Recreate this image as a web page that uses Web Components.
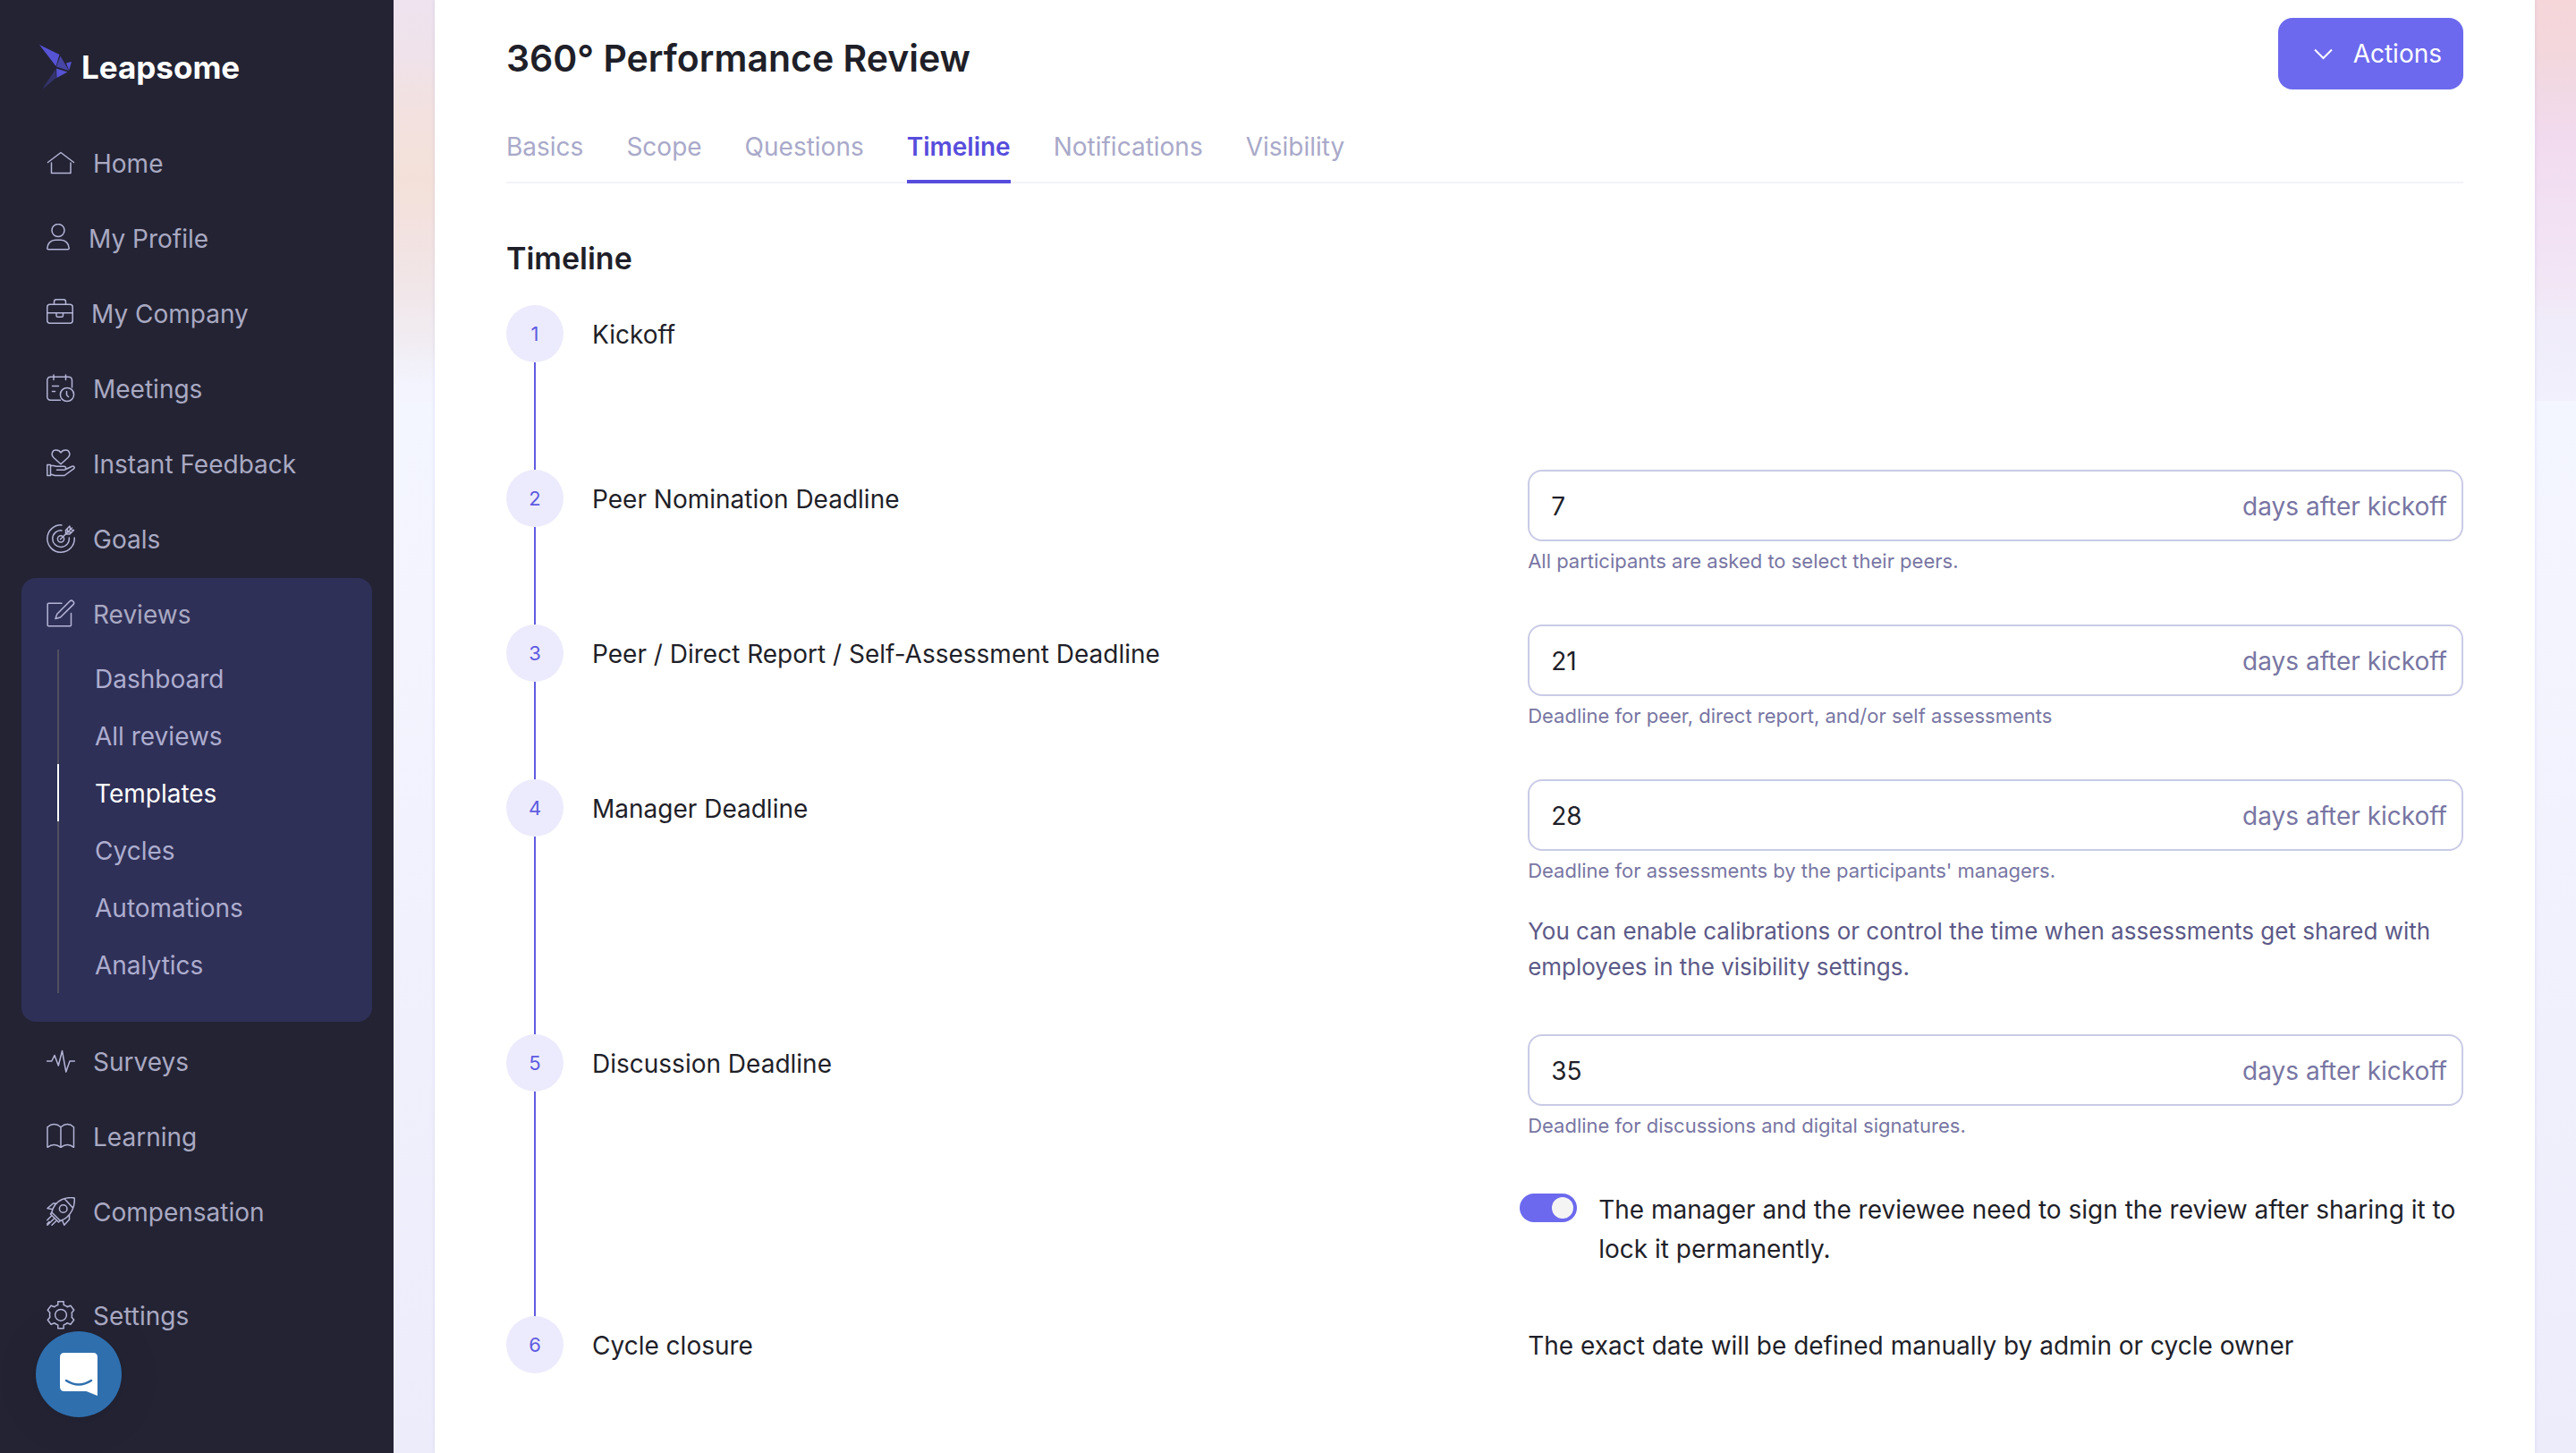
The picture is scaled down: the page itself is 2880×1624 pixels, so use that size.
<!DOCTYPE html>
<html lang="en">
<head>
<meta charset="utf-8">
<title>360° Performance Review</title>
<style>
  body {
    margin: 0;
    font-family: Inter, "Liberation Sans", sans-serif;
    font-size: 28px;
    line-height: 40px;
    color: #1f1f29;
    background: #fff;
  }
</style>
</head>
<body>
<app-shell>
  <side-nav slot="nav">
    <nav-item icon="home">Home</nav-item>
    <nav-item icon="profile">My Profile</nav-item>
    <nav-item icon="company">My Company</nav-item>
    <nav-item icon="meetings">Meetings</nav-item>
    <nav-item icon="feedback">Instant Feedback</nav-item>
    <nav-item icon="goals">Goals</nav-item>
    <nav-group>
      <nav-item slot="head" icon="reviews">Reviews</nav-item>
      <nav-subitem>Dashboard</nav-subitem>
      <nav-subitem>All reviews</nav-subitem>
      <nav-subitem active>Templates</nav-subitem>
      <nav-subitem>Cycles</nav-subitem>
      <nav-subitem>Automations</nav-subitem>
      <nav-subitem>Analytics</nav-subitem>
    </nav-group>
    <nav-item icon="surveys">Surveys</nav-item>
    <nav-item icon="learning">Learning</nav-item>
    <nav-item icon="compensation">Compensation</nav-item>
    <nav-item slot="footer" icon="settings">Settings</nav-item>
  </side-nav>

  <page-header heading="360° Performance Review">
    <action-button>Actions</action-button>
  </page-header>
  <tab-bar>
    <tab-link>Basics</tab-link>
    <tab-link>Scope</tab-link>
    <tab-link>Questions</tab-link>
    <tab-link active>Timeline</tab-link>
    <tab-link>Notifications</tab-link>
    <tab-link>Visibility</tab-link>
  </tab-bar>
  <time-line heading="Timeline">
    <timeline-step number="1" label="Kickoff"></timeline-step>
    <timeline-step number="2" label="Peer Nomination Deadline">
      <days-field name="Peer Nomination Deadline" value="7">All participants are asked to select their peers.</days-field>
    </timeline-step>
    <timeline-step number="3" label="Peer / Direct Report / Self-Assessment Deadline">
      <days-field name="Peer / Direct Report / Self-Assessment Deadline" value="21">Deadline for peer, direct report, and/or self assessments</days-field>
    </timeline-step>
    <timeline-step number="4" label="Manager Deadline">
      <days-field name="Manager Deadline" value="28">Deadline for assessments by the participants' managers.</days-field>
      <info-note>You can enable calibrations or control the time when assessments get shared with employees in the visibility settings.</info-note>
    </timeline-step>
    <timeline-step number="5" label="Discussion Deadline">
      <days-field name="Discussion Deadline" value="35">Deadline for discussions and digital signatures.</days-field>
      <toggle-switch>The manager and the reviewee need to sign the review after sharing it to lock it permanently.</toggle-switch>
    </timeline-step>
    <timeline-step number="6" label="Cycle closure" last>
      <plain-text>The exact date will be defined manually by admin or cycle owner</plain-text>
    </timeline-step>
  </time-line>

  <chat-launcher slot="overlay"></chat-launcher>
</app-shell>

<script>
const define = (name, render) => customElements.define(name, class extends HTMLElement {
  constructor() {
    super();
    this.attachShadow({ mode: 'open' });
  }
  connectedCallback() {
    this.shadowRoot.innerHTML = '<style>*{box-sizing:border-box}</style>' + render(this);
  }
});

/* Each icon: [box width, drawing on a 32px high grid] */
const ICONS = {
  home: [32, '<path d="M1.5 15.5 16 4.500 30.500 15.500M5.500 16V27.500H27V16"/>'],
  profile: [27, '<circle cx="13" cy="7.500" r="7"/><path d="M.8 27.500C.8 22 5 18.300 10 18.300h6c5 0 9.200 3.700 9.200 9.200 0 .8-.4 1.200-1.200 1.200H2c-.8 0-1.200-.4-1.200-1.200z"/>'],
  company: [30, '<rect x=".8" y="6.300" width="28.400" height="21" rx="3"/><path d="M8.500 6.300V3.300q0-2.500 2.500-2.500h8q2.500 0 2.500 2.500v3M.8 15.700H29.200M11 15.700v3q0 1.500 1.500 1.500h4.500q1.500 0 1.500-1.500v-3"/>'],
  meetings: [32, '<path d="M15.500 29.200H4.800q-4 0-4-4V7.200q0-4 4-4H24.500q4 0 4 4V15M8 1v5.500M21.500 1v5.500M6.500 13.500h7M6.500 19.500h3"/><circle cx="23" cy="23" r="7.600"/><path d="M22.500 19.500v4l2 2"/>'],
  feedback: [32, '<path d="M16 16.800 8 9.500C4.500 6 6.500 1 10.500 1 13 1 15 2 16 4 17 2 19 1 21.500 1c4 0 6 5 2.500 8.500zM.8 17.500H4.500V29.500H.8zM4.500 18.500H8l3 .8h8.500c2.800 0 2.800 3.900 0 3.900H11.500M21.500 22.500l7-3.300c2-.8 3.500 1.300 2 2.600L20 29.500H9.500l-5-1.500"/>'],
  goals: [32, '<path d="M17 .9A15.200 15.200 0 1 0 31.200 15M17 6.900A9.300 9.300 0 1 0 25.300 15"/><circle cx="16" cy="16.300" r="3.600"/><path d="M15.500 16.800 28.500 4M21.500 10.500V6.500l4.500-4.500.5 3.800 4 .7-4.500 4.500h-4M23.500 8.500l-.3-3.800M23.500 8.500l3.900.3"/>'],
  reviews: [32, '<path d="M17 4.200H2.200Q1.200 4.200 1.200 5.200V28.800Q1.200 29.800 2.200 29.800H26.500Q27.500 29.800 27.500 28.800V15.500"/><path d="M26 2C27 1 28.600 1 29.600 2S31 4.600 30 5.600L15.500 20 10 21.500 11.800 16.200z"/>'],
  surveys: [32, '<path d="M.5 16H5.800L9 9.500 13.300 21 17.500 4.500 21.800 28 26 16h5.500"/>'],
  learning: [32, '<path d="M16 5.800Q8.500-.7 1 5.800V28.300Q8.500 22.500 16 28.300 23.500 22.500 30.500 28.300V5.800Q23.500-.7 16 5.800zM16 5.800V28.300"/>'],
  compensation: [32, '<path d="M5.800 17C7.500 10.500 11 5.500 17 2.800 22 .6 27 .3 31.200.9 31.600 5.500 31 10 28.800 14.500 26 20 21.500 24.500 15.500 26.500zM5.800 17 4.500 19 13.500 28l2-1.500M20.500 2.200l9 9.800M11.500 7H7.500L1 12.500 7 13.800M25.500 19.500V25L19.800 31.200 17.500 25.800M5 21.500.8 25.800M8 24.500 1 31.300M10.500 27 6 31.300M3 27.500.8 30"/><circle cx="18.700" cy="13" r="4.300"/>'],
  settings: [32, '<circle cx="16" cy="15.800" r="6.400"/><path d="M12.800.7h6.400v3.800q2.200.7 4 2.200l3.700-1.500 3.800 5-2.500 3q.5 2.500 0 5l2.500 3-3.800 5-3.700-1.500q-1.800 1.500-4 2.200v3.800H12.800V26.900q-2.200-.7-4-2.200L5.100 26.200l-3.800-5 2.500-3q-.5-2.500 0-5l-2.500-3 3.800-5L8.800 6.700q1.800-1.500 4-2.200z"/>'],
};

define('app-shell', () => `
  <style>
    :host { display: flex; min-height: 100vh; }
    .nav { flex: 0 0 440px; background: #232334; }
    .stage {
      flex: 1; min-width: 0; display: flex; padding: 0 46px;
      background:
        linear-gradient(#eee3ef, #efe2ea 60px, #f2e1e0 120px, #f3e1d9 200px, #f3e1de 240px, #f1e6e8 320px, #f1ecf2 380px, #f3f4fe 430px) left top / 50% 448px no-repeat,
        linear-gradient(#f6d6d9, #f3d7dc 55px, #f1d9e4 100px, #f2daee 150px, #f2e0f3 230px, #f2e6f5 320px, #f0ecf9 360px, #f1f0fc 448px) right top / 50% 448px no-repeat,
        linear-gradient(#f3f5ff 448px, #f3f4fe 700px, #edecfb);
    }
    .card { flex: 1; min-width: 0; background: #fff; padding: 0 80px; box-shadow: 0 0 4px rgba(80, 80, 160, .14); }
  </style>
  <div class="nav"><slot name="nav"></slot></div>
  <div class="stage"><main class="card"><slot></slot></main></div>
  <slot name="overlay"></slot>`);

define('side-nav', () => `
  <style>
    :host { display: block; padding: 50px 24px 0; }
    .logo { display: flex; align-items: center; gap: 11px; height: 50px; margin: 0 20px 42px; color: #fff; font-size: 35px; font-weight: 700; text-decoration: none; }
    nav, .footer { display: flex; flex-direction: column; gap: 4px; }
    .footer { margin-top: 36px; }
  </style>
  <a class="logo" href="#home">
    <svg width="36" height="50" viewBox="0 0 36 50" aria-hidden="true">
      <path fill="#5653d4" d="M0 0 22.500 11 18.500 24z"/>
      <path fill="#4745a6" d="M23.500 12.500 33 29 19 24.500z"/>
      <path fill="#5653d4" d="M30 20.500 36 19 33.200 28.500z"/>
      <path fill="#5653d4" d="M19 26.500 31.500 30.500 19.500 37z"/>
      <path fill="#34336b" d="M18.200 27 19 37 3 50z"/>
    </svg>
    <span>Leapsome</span>
  </a>
  <nav><slot></slot></nav>
  <div class="footer"><slot name="footer"></slot></div>`);

define('nav-item', el => {
  const [width, art] = ICONS[el.getAttribute('icon')];
  return `
  <style>
    :host { display: block; }
    a { display: flex; align-items: center; gap: 20px; height: 80px; padding: 0 28px; color: #a9a9c2; text-decoration: none; }
    svg { flex: none; fill: none; stroke: #b4b4d6; stroke-width: 1.5; stroke-linejoin: round; stroke-linecap: round; }
    span { line-height: 40px; padding-top: 2px; }
  </style>
  <a href="#${el.getAttribute('icon')}">
    <svg width="${width}" height="32" viewBox="0 0 ${width} 32" aria-hidden="true">${art}</svg>
    <span><slot></slot></span>
  </a>`;
});

define('nav-group', () => `
  <style>
    :host { display: block; background: #2f3057; border-radius: 16px; padding-bottom: 32px; }
    .list { padding-left: 40px; }
  </style>
  <slot name="head"></slot>
  <div class="list"><slot></slot></div>`);

define('nav-subitem', () => `
  <style>
    :host { display: block; }
    a { display: block; height: 64px; line-height: 66px; padding-left: 40px; border-left: 2px solid #50505f; color: #adadcf; text-decoration: none; }
    :host([active]) a { color: #fff; border-color: #fff; }
  </style>
  <a href="#reviews"><slot></slot></a>`);

define('page-header', el => `
  <style>
    :host { display: flex; justify-content: space-between; align-items: flex-end; padding-top: 20px; }
    h1 { margin: 0; font-size: 41px; line-height: 70px; font-weight: 600; }
  </style>
  <h1>${el.getAttribute('heading')}</h1>
  <slot></slot>`);

define('action-button', () => `
  <style>
    :host { display: block; }
    button { display: flex; align-items: center; gap: 22px; height: 80px; padding: 0 24px 0 38px; border: 0; border-radius: 16px; background: #6c69ee; color: #fff; font: inherit; }
  </style>
  <button type="button" aria-haspopup="menu">
    <svg width="24" height="24" viewBox="0 0 24 24" fill="none" stroke="#fff" stroke-width="2" aria-hidden="true"><path d="M3 7.500 12.500 17 22 7.500"/></svg>
    <slot></slot>
  </button>`);

define('tab-bar', () => `
  <style>
    :host { display: block; margin-top: 44px; }
    nav { display: flex; gap: 48px; border-bottom: 2px solid #f3f3fa; }
  </style>
  <nav><slot></slot></nav>`);

define('tab-link', () => `
  <style>
    :host { display: block; margin-bottom: -2px; }
    a { display: block; padding-bottom: 17px; border-bottom: 4px solid transparent; color: #a9a9c9; text-decoration: none; }
    :host([active]) a { color: #574ddc; border-color: #574ddc; font-weight: 600; }
  </style>
  <a href="#tab"><slot></slot></a>`);

define('time-line', el => `
  <style>
    :host { display: block; margin-top: 62px; }
    h2 { margin: 0 0 30px; font-size: 34px; line-height: 44px; font-weight: 600; }
  </style>
  <h2>${el.getAttribute('heading')}</h2>
  <slot></slot>`);

define('timeline-step', el => `
  <style>
    :host { display: flex; min-height: 184px; }
    :host(:not(:first-child)) { min-height: 0; }
    .rail { flex: none; width: 64px; display: flex; flex-direction: column; align-items: center; }
    .dot { width: 64px; height: 64px; border-radius: 50%; background: #ecebfd; color: #5f5be0; font-size: 22px; line-height: 64px; text-align: center; }
    .line { flex: 1; width: 2px; background: #5f5be0; }
    :host([last]) .line { display: none; }
    .label { flex: 1; padding-left: 32px; line-height: 66px; }
    .body { flex: 0 0 47.8%; min-width: 0; padding-bottom: 55px; }
    :host([last]) .body { padding-bottom: 0; }
  </style>
  <div class="rail"><div class="dot">${el.getAttribute('number')}</div><div class="line"></div></div>
  <div class="label">${el.getAttribute('label')}</div>
  <div class="body"><slot></slot></div>`);

define('days-field', el => `
  <style>
    :host { display: block; }
    label { display: flex; align-items: center; height: 80px; padding: 2px 16px 0 24px; border: 2px solid #c9cbe6; border-radius: 16px; color: #7876a3; }
    input { flex: 1; min-width: 0; height: 72px; padding: 0; border: 0; outline: 0; background: none; font: inherit; color: #1f1f29; }
    p { margin: 6px 0 0; font-size: 22px; line-height: 32px; color: #7876a3; }
  </style>
  <label><input type="text" inputmode="numeric" value="${el.getAttribute('value')}" aria-label="${el.getAttribute('name')}, days after kickoff" aria-describedby="hint"><span>days after kickoff</span></label>
  <p id="hint"><slot></slot></p>`);

define('info-note', () => `
  <style>
    :host { display: block; margin-top: 32px; font-size: 26px; line-height: 40px; color: #5c5a88; }
  </style>
  <slot></slot>`);

define('toggle-switch', () => `
  <style>
    :host { display: block; margin: 56px 0 -2px -9px; }
    label { display: flex; gap: 24px; line-height: 44px; }
    input { appearance: none; flex: none; width: 64px; height: 32px; margin: 4px 0 0; padding: 4px; border-radius: 16px; background: #6c69ee; display: flex; justify-content: flex-end; }
    input::before { content: ""; width: 24px; height: 24px; border-radius: 50%; background: #f4f4f4; }
    input:not(:checked) { background: #c9cbe6; justify-content: flex-start; }
  </style>
  <label><input type="checkbox" role="switch" checked><span><slot></slot></span></label>`);

define('plain-text', () => `
  <style>:host { display: block; line-height: 66px; }</style>
  <slot></slot>`);

define('chat-launcher', () => `
  <style>
    :host { position: fixed; left: 40px; bottom: 40px; }
    button { display: flex; align-items: center; justify-content: center; width: 96px; height: 96px; padding: 0; border: 0; border-radius: 50%; background: #2f6fae; box-shadow: 0 2px 12px rgba(0, 0, 0, .08), 0 4px 64px rgba(0, 0, 0, .06); }
  </style>
  <button type="button" aria-label="Open chat">
    <svg width="42" height="48" viewBox="0 0 42 48" aria-hidden="true">
      <path fill="#fff" d="M5 0H37Q42 0 42 5V48L29.500 43H5Q0 43 0 38V5Q0 0 5 0z"/>
      <path fill="none" stroke="#2f6fae" stroke-width="2.500" stroke-linecap="round" d="M7 31Q21 40 35 31"/>
    </svg>
  </button>`);
</script>
</body>
</html>
